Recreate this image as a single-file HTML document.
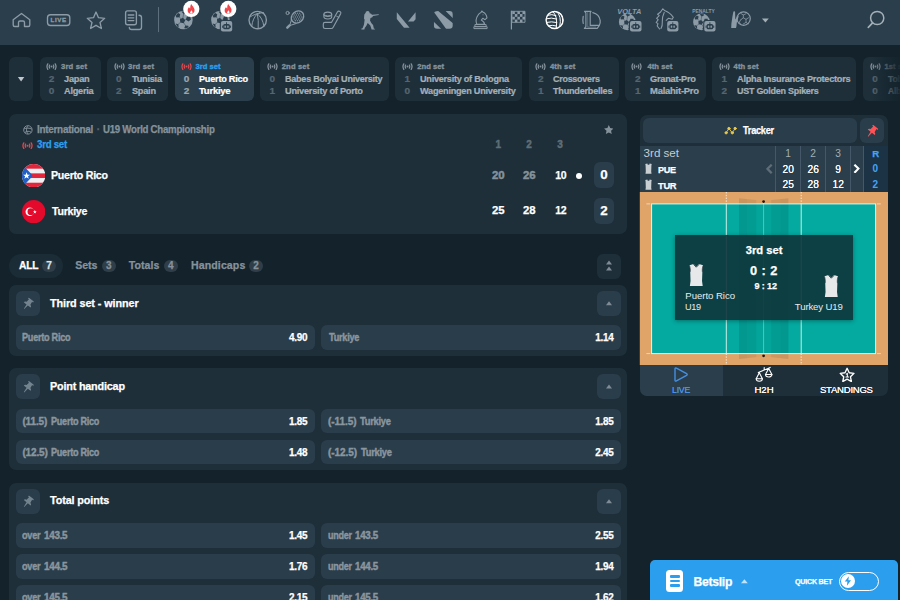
<!DOCTYPE html>
<html><head><meta charset="utf-8"><title>U19 World Championship</title>
<style>
*{box-sizing:border-box;margin:0;padding:0}
html,body{width:900px;height:600px;overflow:hidden;background:#13222b;font-family:"Liberation Sans",sans-serif;color:#fff}
body{position:relative}
.abs{position:absolute}
.t{position:absolute;white-space:nowrap;font-weight:bold;line-height:1;-webkit-text-stroke:0.25px}
#nav{position:absolute;left:0;top:0;width:900px;height:45px;background:#2a3e4c}
</style></head><body>
<div id="nav">
<svg style="position:absolute;left:0;top:0;width:900px;height:45px" viewBox="0 0 900 45" fill="none" stroke="#8c9ba6" stroke-width="1.350" stroke-linecap="round" stroke-linejoin="round"><path d="M13.200 19.800L21.500 13.500L29.800 19.800V25Q29.800 26.500 28.300 26.500H24.500V22.500Q24.500 21 23 21H20Q18.500 21 18.500 22.500V26.500H14.700Q13.200 26.500 13.200 25Z"></path><rect x="47.500" y="14.700" width="22.300" height="10.800" rx="3"></rect><text x="58.700" y="22.400" font-family="Liberation Sans, sans-serif" font-size="6.200" font-weight="bold" fill="#8c9ba6" stroke="#8c9ba6" stroke-width="0.3" text-anchor="middle" letter-spacing="0.600">LIVE</text><path d="M96 12l2.500 5.700 6.200.600-4.700 4.100 1.400 6.100L96 25.300l-5.400 3.200 1.400-6.100-4.700-4.100 6.200-.600z"></path><rect x="125.600" y="10.900" width="10.800" height="13.800" rx="2"></rect><path d="M128.200 15h5.600M128.200 17.800h5.600M128.200 20.600h5.600"></path><path d="M139 15.200q2.500 0 2.500 2.300V27.200q0 2.300-2.300 2.300H131.500q-2.200 0-2.200-2.200"></path><path d="M158.500 7.500V31.700" stroke="#5d6f7c" stroke-width="1"></path><g stroke="none"><circle cx="183.4" cy="20" r="9.3" fill="#8c9ba6"></circle><clipPath id="cb1"><circle cx="183.4" cy="20" r="8.755851063829788"></circle></clipPath><g clip-path="url(#cb1)" fill="#2a3e4c"><path d="M182.98 17.78L185.26 20.27L183.60 23.20L180.30 22.53L179.91 19.18Z"></path><path d="M179.50 17.18L176.37 17.43L175.16 14.53L177.55 12.49L180.23 14.13Z"></path><path d="M180.68 18.56L179.06 16.68" stroke="#2a3e4c" stroke-width="0.69" opacity="0.7"></path><path d="M185.90 19.51L186.90 16.53L190.04 16.57L190.98 19.57L188.41 21.38Z"></path><path d="M184.96 19.80L186.76 19.24" stroke="#2a3e4c" stroke-width="0.69" opacity="0.7"></path><path d="M178.35 24.17L178.62 26.95L176.06 28.06L174.21 25.96L175.63 23.56Z"></path><path d="M180.41 22.36L178.21 24.30" stroke="#2a3e4c" stroke-width="0.69" opacity="0.7"></path><path d="M185.37 25.41L188.27 25.64L188.95 28.46L186.47 29.99L184.26 28.10Z"></path><path d="M183.81 22.87L185.47 25.58" stroke="#2a3e4c" stroke-width="0.69" opacity="0.7"></path><path d="M183.63 13.92L181.54 11.73L182.98 9.07L185.95 9.62L186.36 12.61Z"></path><path d="M182.89 17.97L183.62 13.97" stroke="#2a3e4c" stroke-width="0.69" opacity="0.7"></path></g><circle cx="220.4" cy="20" r="9.3" fill="#8c9ba6"></circle><clipPath id="cb2"><circle cx="220.4" cy="20" r="8.755851063829788"></circle></clipPath><g clip-path="url(#cb2)" fill="#2a3e4c"><path d="M219.98 17.78L222.26 20.27L220.60 23.20L217.30 22.53L216.91 19.18Z"></path><path d="M216.50 17.18L213.37 17.43L212.16 14.53L214.55 12.49L217.23 14.13Z"></path><path d="M217.68 18.56L216.06 16.68" stroke="#2a3e4c" stroke-width="0.69" opacity="0.7"></path><path d="M222.90 19.51L223.90 16.53L227.04 16.57L227.98 19.57L225.41 21.38Z"></path><path d="M221.96 19.80L223.76 19.24" stroke="#2a3e4c" stroke-width="0.69" opacity="0.7"></path><path d="M215.35 24.17L215.62 26.95L213.06 28.06L211.21 25.96L212.63 23.56Z"></path><path d="M217.41 22.36L215.21 24.30" stroke="#2a3e4c" stroke-width="0.69" opacity="0.7"></path><path d="M222.37 25.41L225.27 25.64L225.95 28.46L223.47 29.99L221.26 28.10Z"></path><path d="M220.81 22.87L222.47 25.58" stroke="#2a3e4c" stroke-width="0.69" opacity="0.7"></path><path d="M220.63 13.92L218.54 11.73L219.98 9.07L222.95 9.62L223.36 12.61Z"></path><path d="M219.89 17.97L220.62 13.97" stroke="#2a3e4c" stroke-width="0.69" opacity="0.7"></path></g><rect x="219.8" y="19.9" width="13.5" height="12.8" rx="3" fill="#2a3e4c"></rect><rect x="220.9" y="21" width="11.3" height="10.6" rx="2" fill="#8c9ba6"></rect><rect x="223.20000000000002" y="24.1" width="6.700000000000001" height="5.2" rx="1.500" fill="#2a3e4c"></rect><rect x="222.20000000000002" y="25.6" width="1" height="2.200" fill="#2a3e4c"></rect><rect x="229.9" y="25.6" width="1" height="2.200" fill="#2a3e4c"></rect><rect x="226.10000000000002" y="22.3" width="0.900" height="1.900" fill="#2a3e4c"></rect><rect x="224.45000000000002" y="25.5" width="1.500" height="2.200" rx="0.500" fill="#8c9ba6"></rect><rect x="227.15" y="25.5" width="1.500" height="2.200" rx="0.500" fill="#8c9ba6"></rect><circle cx="191.3" cy="8.9" r="8.1" fill="#fff"></circle><path transform="translate(187.4 3.9000000000000004) scale(0.88)" d="M4.300 0C5.300 2 7.600 3.500 8.100 6.300 8.600 9.100 6.700 11.200 4.200 11.200 1.700 11.200 -0.100 9.300 0.300 6.800 0.500 5.500 1.300 4.600 1.800 3.600 2.200 4.500 2.600 5 3.200 5.300 3.100 3.400 3.400 1.700 4.300 0Z" fill="#f0474d"></path><path transform="translate(187.4 3.9000000000000004) scale(0.88)" d="M4.600 7.200C5.300 8.200 5.900 8.800 5.800 9.700 5.700 10.500 5.100 11 4.400 11 3.700 11 3.100 10.500 3.100 9.700 3.100 8.800 4 8.300 4.600 7.200Z" fill="#fff"></path><circle cx="228.3" cy="8.9" r="8.1" fill="#fff"></circle><path transform="translate(224.4 3.9000000000000004) scale(0.88)" d="M4.300 0C5.300 2 7.600 3.500 8.100 6.300 8.600 9.100 6.700 11.200 4.200 11.200 1.700 11.200 -0.100 9.300 0.300 6.800 0.500 5.500 1.300 4.600 1.800 3.600 2.200 4.500 2.600 5 3.200 5.300 3.100 3.400 3.400 1.700 4.300 0Z" fill="#f0474d"></path><path transform="translate(224.4 3.9000000000000004) scale(0.88)" d="M4.600 7.200C5.300 8.200 5.900 8.800 5.800 9.700 5.700 10.500 5.100 11 4.400 11 3.700 11 3.100 10.500 3.100 9.700 3.100 8.800 4 8.300 4.600 7.200Z" fill="#fff"></path></g><circle cx="257.700" cy="20" r="8.700"></circle><path d="M249.500 17.300Q255.500 13 263.500 12.600M257.300 13.800Q252.500 18.500 251.800 26M257.300 13.800Q258.800 20 258.200 28.500M257.300 13.800Q262.800 18 263.800 26M259 11.500Q260 12.500 259.800 13.500" stroke-width="1"></path><ellipse cx="297.500" cy="17" rx="6.700" ry="5.600" transform="rotate(-40 297.500 17)"></ellipse><path d="M289.600 25.400L287.300 27.700" stroke-width="2.400"></path><path d="M289.800 25L291.600 19.500M290.200 25.400L296 23.600" stroke-width="1"></path><g stroke="none" fill="#8c9ba6" opacity="0.85"><circle cx="294.2" cy="15.1" r="0.75"></circle><circle cx="293.1" cy="17.0" r="0.75"></circle><circle cx="294.2" cy="18.9" r="0.75"></circle><circle cx="295.3" cy="13.2" r="0.75"></circle><circle cx="296.4" cy="15.1" r="0.75"></circle><circle cx="295.3" cy="17.0" r="0.75"></circle><circle cx="296.4" cy="18.9" r="0.75"></circle><circle cx="295.3" cy="20.8" r="0.75"></circle><circle cx="297.5" cy="13.2" r="0.75"></circle><circle cx="298.6" cy="15.1" r="0.75"></circle><circle cx="297.5" cy="17.0" r="0.75"></circle><circle cx="298.6" cy="18.9" r="0.75"></circle><circle cx="297.5" cy="20.8" r="0.75"></circle><circle cx="299.7" cy="13.2" r="0.75"></circle><circle cx="300.8" cy="15.1" r="0.75"></circle><circle cx="299.7" cy="17.0" r="0.75"></circle><circle cx="300.8" cy="18.9" r="0.75"></circle><circle cx="299.7" cy="20.8" r="0.75"></circle><circle cx="301.9" cy="17.0" r="0.75"></circle></g><circle cx="287.600" cy="13" r="1.600" stroke-width="1"></circle><path d="M337.400 12L331.600 22.300H325Q323.300 22.300 323.300 24V26.800Q323.300 28.500 325 28.500H331.300Q332.600 28.500 333.200 27.300L340.700 13.600Q341.300 12.200 340 11.500Q338.300 10.700 337.400 12Z" stroke-width="1.150"></path><path d="M336.600 16.200l2.300 1.200" stroke-width="0.900"></path><ellipse cx="327.800" cy="14.300" rx="3.900" ry="2.200" stroke-width="1.100"></ellipse><path d="M323.900 14.300v2.500q0 2.200 3.900 2.200t3.900-2.200v-2.500" stroke-width="1.100"></path><path d="M325.300 15.400q2.500 1 5 0" stroke-width="0.8"></path><path stroke="none" fill="#8c9ba6" d="M366.800 11.300q1.700-.600 2.600.700l.300 1.300 1.500.500.700 1 6.800-.600.100.800-5.800 1-.700 1.200-1.800.800-.500 2.600 1.500 2.700 1.600 1.600.800 3.800h1v.7h-3.300l-1.300-4-2.600-2.500-1.300 2.800-1.700 2.200-.300 1.500h-3v-.800l1.200-.400 1.400-3.700.600-4.700-.600-1.400.300-3.800 1.400-1.900q-.300-1.200 1.100-1.400z"></path><path stroke="none" fill="#8c9ba6" d="M396.800 12.200l12.800 15.600h-5.600l-7.200-8.800zM415.600 12.200v7l-2 2.400h-5.600z"></path><g stroke="none"><clipPath id="cdota"><rect x="433.900" y="11.100" width="18.800" height="17.700" rx="3.200"></rect></clipPath><g clip-path="url(#cdota)" fill="#8c9ba6"><path d="M433.500 11.500L438.200 11L453 23.200V29H446.200Z"></path><path d="M445.600 11H453V18.300Z"></path><path d="M433.500 21.500L441.300 29H433.500Z"></path></g></g><path d="M476.800 24.400Q475 19.500 477.800 15.500 479 13.300 481 12.600L481.800 11 483.200 12.300Q486.200 13.500 487 17.800L485 19.600 482.800 18.300 481.300 20Q484.300 21.800 484.600 24.400Z" stroke-width="1.100"></path><path d="M475.300 24.600h10.800v2h-10.800zM474.300 26.700h12.800v1.900H474.300z" stroke-width="1"></path><circle cx="483" cy="14.800" r="0.500" fill="#8c9ba6" stroke="none"></circle><path d="M511.400 11V29" stroke-width="1.200"></path><rect x="512.300" y="11.300" width="12.700" height="11" stroke-width="0.9"></rect><g stroke="none" fill="#8c9ba6"><rect x="512.30" y="11.30" width="2.540" height="2.750"></rect><rect x="517.38" y="11.30" width="2.540" height="2.750"></rect><rect x="522.46" y="11.30" width="2.540" height="2.750"></rect><rect x="514.84" y="14.05" width="2.540" height="2.750"></rect><rect x="519.92" y="14.05" width="2.540" height="2.750"></rect><rect x="512.30" y="16.80" width="2.540" height="2.750"></rect><rect x="517.38" y="16.80" width="2.540" height="2.750"></rect><rect x="522.46" y="16.80" width="2.540" height="2.750"></rect><rect x="514.84" y="19.55" width="2.540" height="2.750"></rect><rect x="519.92" y="19.55" width="2.540" height="2.750"></rect></g><g stroke="#fff"><circle cx="554.600" cy="20" r="8.500" stroke-width="1.400"></circle><path d="M547.300 15.300Q552 13.700 556 15.600M546.200 18.800Q551.500 17.200 556.700 19M546.500 22.400Q551.500 21.200 556.700 22.500M548.300 25.800Q552.300 24.800 556.200 25.900M552.600 11.600Q558 15.500 556.300 28M556.300 11.500Q562 15.500 559.800 26.500M559.800 12.800Q563.500 16.500 562.500 23" stroke-width="1"></path></g><path d="M584.600 11.300h6.500l-.900 1.500v12.600h9.200l-2.200 3h-12.800l1.500-1.900v-13.600z" stroke-width="1.150"></path><path d="M587.700 12.500v14.500h8" stroke-width="0.700" opacity="0.700"></path><path d="M592.800 12.600Q599.300 14.200 600.200 20.500Q600.400 22.800 599.600 24.600M583.200 16.300Q582.500 20 583.200 23.500" stroke-width="1.200"></path><g stroke="none"><circle cx="627.3" cy="21.9" r="8.4" fill="#8c9ba6"></circle><clipPath id="cb3"><circle cx="627.3" cy="21.9" r="7.908510638297873"></circle></clipPath><g clip-path="url(#cb3)" fill="#2a3e4c"><path d="M626.92 19.90L628.98 22.14L627.48 24.79L624.50 24.19L624.15 21.16Z"></path><path d="M623.77 19.36L620.95 19.58L619.86 16.96L622.02 15.12L624.44 16.60Z"></path><path d="M624.84 20.60L623.38 18.90" stroke="#2a3e4c" stroke-width="0.63" opacity="0.7"></path><path d="M629.55 21.46L630.46 18.77L633.30 18.80L634.14 21.51L631.83 23.15Z"></path><path d="M628.71 21.72L630.33 21.21" stroke="#2a3e4c" stroke-width="0.63" opacity="0.7"></path><path d="M622.74 25.66L622.98 28.17L620.67 29.18L619.00 27.28L620.28 25.11Z"></path><path d="M624.60 24.03L622.61 25.78" stroke="#2a3e4c" stroke-width="0.63" opacity="0.7"></path><path d="M629.08 26.79L631.70 26.99L632.31 29.54L630.08 30.92L628.08 29.22Z"></path><path d="M627.67 24.49L629.17 26.94" stroke="#2a3e4c" stroke-width="0.63" opacity="0.7"></path><path d="M627.51 16.41L625.62 14.43L626.92 12.03L629.61 12.52L629.97 15.23Z"></path><path d="M626.84 20.06L627.50 16.45" stroke="#2a3e4c" stroke-width="0.63" opacity="0.7"></path></g><rect x="628.9" y="19.9" width="13.7" height="12.8" rx="3" fill="#2a3e4c"></rect><rect x="630" y="21" width="11.5" height="10.6" rx="2" fill="#8c9ba6"></rect><rect x="632.3" y="24.1" width="6.9" height="5.2" rx="1.500" fill="#2a3e4c"></rect><rect x="631.3" y="25.6" width="1" height="2.200" fill="#2a3e4c"></rect><rect x="639.1999999999999" y="25.6" width="1" height="2.200" fill="#2a3e4c"></rect><rect x="635.3" y="22.3" width="0.900" height="1.900" fill="#2a3e4c"></rect><rect x="633.55" y="25.5" width="1.500" height="2.200" rx="0.500" fill="#8c9ba6"></rect><rect x="636.4499999999999" y="25.5" width="1.500" height="2.200" rx="0.500" fill="#8c9ba6"></rect></g><text x="629.300" y="14" font-family="Liberation Sans, sans-serif" font-size="7.500" font-weight="bold" font-style="italic" fill="#8c9ba6" stroke="none" text-anchor="middle" textLength="24" lengthAdjust="spacingAndGlyphs">VOLTA</text><path stroke="#8c9ba6" stroke-width="1.100" fill="none" d="M662.800 8.800L665 10.800Q669.500 12.200 673.300 17.300L672.200 19.200 668.600 18.200 666.200 20.400M662.800 8.800L660.600 12 657.600 14.300 659.200 15.600 656.600 18.400 658.200 19.600 656.200 22.500 658 23.600 657.200 26 659.600 29M664.200 12.500Q662 17 662.300 21.500T661 28.500"></path><g stroke="none"><rect x="666.1" y="19.9" width="13.399999999999999" height="12.8" rx="3" fill="#2a3e4c"></rect><rect x="667.2" y="21" width="11.2" height="10.6" rx="2" fill="#8c9ba6"></rect><rect x="669.5" y="24.1" width="6.6" height="5.2" rx="1.500" fill="#2a3e4c"></rect><rect x="668.5" y="25.6" width="1" height="2.200" fill="#2a3e4c"></rect><rect x="676.1" y="25.6" width="1" height="2.200" fill="#2a3e4c"></rect><rect x="672.35" y="22.3" width="0.900" height="1.900" fill="#2a3e4c"></rect><rect x="670.75" y="25.5" width="1.500" height="2.200" rx="0.500" fill="#8c9ba6"></rect><rect x="673.35" y="25.5" width="1.500" height="2.200" rx="0.500" fill="#8c9ba6"></rect></g><g stroke="none"><circle cx="701.5" cy="21.9" r="8.4" fill="#8c9ba6"></circle><clipPath id="cb4"><circle cx="701.5" cy="21.9" r="7.908510638297873"></circle></clipPath><g clip-path="url(#cb4)" fill="#2a3e4c"><path d="M701.12 19.90L703.18 22.14L701.68 24.79L698.70 24.19L698.35 21.16Z"></path><path d="M697.97 19.36L695.15 19.58L694.06 16.96L696.22 15.12L698.64 16.60Z"></path><path d="M699.04 20.60L697.58 18.90" stroke="#2a3e4c" stroke-width="0.63" opacity="0.7"></path><path d="M703.75 21.46L704.66 18.77L707.50 18.80L708.34 21.51L706.03 23.15Z"></path><path d="M702.91 21.72L704.53 21.21" stroke="#2a3e4c" stroke-width="0.63" opacity="0.7"></path><path d="M696.94 25.66L697.18 28.17L694.87 29.18L693.20 27.28L694.48 25.11Z"></path><path d="M698.80 24.03L696.81 25.78" stroke="#2a3e4c" stroke-width="0.63" opacity="0.7"></path><path d="M703.28 26.79L705.90 26.99L706.51 29.54L704.28 30.92L702.28 29.22Z"></path><path d="M701.87 24.49L703.37 26.94" stroke="#2a3e4c" stroke-width="0.63" opacity="0.7"></path><path d="M701.71 16.41L699.82 14.43L701.12 12.03L703.81 12.52L704.17 15.23Z"></path><path d="M701.04 20.06L701.70 16.45" stroke="#2a3e4c" stroke-width="0.63" opacity="0.7"></path></g><rect x="703.1999999999999" y="19.9" width="13.399999999999999" height="12.8" rx="3" fill="#2a3e4c"></rect><rect x="704.3" y="21" width="11.2" height="10.6" rx="2" fill="#8c9ba6"></rect><rect x="706.5999999999999" y="24.1" width="6.6" height="5.2" rx="1.500" fill="#2a3e4c"></rect><rect x="705.5999999999999" y="25.6" width="1" height="2.200" fill="#2a3e4c"></rect><rect x="713.1999999999999" y="25.6" width="1" height="2.200" fill="#2a3e4c"></rect><rect x="709.4499999999999" y="22.3" width="0.900" height="1.900" fill="#2a3e4c"></rect><rect x="707.8499999999999" y="25.5" width="1.500" height="2.200" rx="0.500" fill="#8c9ba6"></rect><rect x="710.4499999999999" y="25.5" width="1.500" height="2.200" rx="0.500" fill="#8c9ba6"></rect></g><text x="703.500" y="13" font-family="Liberation Sans, sans-serif" font-size="6" font-weight="bold" fill="#8c9ba6" stroke="none" text-anchor="middle" textLength="22.500" lengthAdjust="spacingAndGlyphs">PENALTY</text><circle cx="743.600" cy="18.600" r="6.700" stroke-width="1.200"></circle><path d="M741 13.500l2.300 1.500 2.500-1.200M743.300 15v2.800l-2.300 1.800M743.300 17.800l2.700 1.500 2.500-1.500M746 19.300v3l2 1.500M746 22.300l-2.800 1.800M740.800 19.600l-1.500 2.600 1.500 2.500" stroke-width="0.800"></path><path stroke="none" fill="#8c9ba6" d="M734 11.200q.900-.300 1.100.700l.200 7.600 2-3.300q.700-.900 1.400-.200l-.600 2.300-1.300 4.400-.300 3.300-.500 2h-4.800l.200-4.500 1-6.800 .900-4.800q.200-.600.700-.700z"></path><path d="M762 18.600h6.800l-3.400 3.900z" fill="#a4afb7" stroke="none"></path><circle cx="877.200" cy="18" r="6.600" stroke="#a4afb7" stroke-width="1.500"></circle><path d="M872.600 22.900l-4.300 4.400" stroke="#a4afb7" stroke-width="1.700"></path></svg>
</div>
<div class="abs" style="left:9.3px;top:57.0px;width:23.4px;height:43.5px;background:#1e2f3a;border-radius:6px;"></div>
<svg class="abs" style="left:0;top:0;width:900px;height:600px;pointer-events:none" viewBox="0 0 900 600"><path d="M17.900000000000002 77.1h6.4l-3.2 4.4z" fill="#c0c8ce"></path></svg>
<div class="abs" style="left:40.0px;top:57.0px;width:60.7px;height:43.5px;background:#1e2f3a;border-radius:6px;"></div>
<svg class="abs" style="left:46.2px;top:63.2px;width:11px;height:7.2px" viewBox="0 0 22 14" fill="none" stroke="#85929b" stroke-width="2.5" stroke-linecap="round"><circle cx="11" cy="7" r="2" fill="#85929b" stroke="none"></circle><path d="M7.200 4Q5.700 7 7.200 10M14.800 4Q16.300 7 14.800 10M3.600 1.500Q0.300 7 3.600 12.500M18.400 1.500Q21.700 7 18.400 12.500"></path></svg>
<div class="t" style="left: 61px; top: 63.14px; font-size: 7.6px; color: rgb(133, 146, 155); font-weight: bold; -webkit-text-stroke: 0.35px; letter-spacing: 0.182px; transform: scale(1, 1); transform-origin: 0px 85%;">3rd set</div>
<div class="t" style="left: -8.5px; width: 120px; text-align: center; top: 73.5px; font-size: 10px; color: rgb(86, 102, 112); font-weight: bold; transform: scale(1, 0.94); transform-origin: 50% 85%;">2</div>
<div class="t" style="left: 64.3px; top: 73.5px; font-size: 10px; color: rgb(164, 175, 183); font-weight: bold; letter-spacing: -0.28px; transform: scale(0.9249, 0.94); transform-origin: 0px 85%;">Japan</div>
<div class="t" style="left: -8.5px; width: 120px; text-align: center; top: 85.7px; font-size: 10px; color: rgb(86, 102, 112); font-weight: bold; transform: scale(1, 0.94); transform-origin: 50% 85%;">0</div>
<div class="t" style="left: 64.3px; top: 85.7px; font-size: 10px; color: rgb(164, 175, 183); font-weight: bold; letter-spacing: -0.28px; transform: scale(0.9216, 0.94); transform-origin: 0px 85%;">Algeria</div>
<div class="abs" style="left:107.3px;top:57.0px;width:60.4px;height:43.5px;background:#1e2f3a;border-radius:6px;"></div>
<svg class="abs" style="left:113.5px;top:63.2px;width:11px;height:7.2px" viewBox="0 0 22 14" fill="none" stroke="#85929b" stroke-width="2.5" stroke-linecap="round"><circle cx="11" cy="7" r="2" fill="#85929b" stroke="none"></circle><path d="M7.200 4Q5.700 7 7.200 10M14.800 4Q16.300 7 14.800 10M3.600 1.500Q0.300 7 3.600 12.500M18.400 1.500Q21.700 7 18.400 12.500"></path></svg>
<div class="t" style="left: 128px; top: 63.14px; font-size: 7.6px; color: rgb(133, 146, 155); font-weight: bold; -webkit-text-stroke: 0.35px; letter-spacing: 0.182px; transform: scale(1, 1); transform-origin: 0px 85%;">3rd set</div>
<div class="t" style="left: 58.7px; width: 120px; text-align: center; top: 73.5px; font-size: 10px; color: rgb(86, 102, 112); font-weight: bold; transform: scale(1, 0.94); transform-origin: 50% 85%;">0</div>
<div class="t" style="left: 131.5px; top: 73.5px; font-size: 10px; color: rgb(164, 175, 183); font-weight: bold; letter-spacing: -0.28px; transform: scale(0.9207, 0.94); transform-origin: 0px 85%;">Tunisia</div>
<div class="t" style="left: 58.7px; width: 120px; text-align: center; top: 85.7px; font-size: 10px; color: rgb(86, 102, 112); font-weight: bold; transform: scale(1, 0.94); transform-origin: 50% 85%;">2</div>
<div class="t" style="left: 131.5px; top: 85.7px; font-size: 10px; color: rgb(164, 175, 183); font-weight: bold; letter-spacing: -0.28px; transform: scale(0.919, 0.94); transform-origin: 0px 85%;">Spain</div>
<div class="abs" style="left:174.6px;top:57.0px;width:79.2px;height:43.5px;background:#2a3e4c;border-radius:6px;"></div>
<svg class="abs" style="left:180.8px;top:63.2px;width:11px;height:7.2px" viewBox="0 0 22 14" fill="none" stroke="#e5484d" stroke-width="2.5" stroke-linecap="round"><circle cx="11" cy="7" r="2" fill="#e5484d" stroke="none"></circle><path d="M7.200 4Q5.700 7 7.200 10M14.800 4Q16.300 7 14.800 10M3.600 1.500Q0.300 7 3.600 12.500M18.400 1.500Q21.700 7 18.400 12.500"></path></svg>
<div class="t" style="left: 195.6px; top: 63.14px; font-size: 7.6px; color: rgb(43, 159, 238); font-weight: bold; -webkit-text-stroke: 0.35px; letter-spacing: 0.016px; transform: scale(1, 1); transform-origin: 0px 85%;">3rd set</div>
<div class="t" style="left: 126.6px; width: 120px; text-align: center; top: 73.5px; font-size: 10px; color: rgb(154, 166, 174); font-weight: bold; transform: scale(1, 0.94); transform-origin: 50% 85%;">0</div>
<div class="t" style="left: 198.9px; top: 73.5px; font-size: 10px; color: rgb(255, 255, 255); font-weight: bold; letter-spacing: -0.28px; transform: scale(0.9189, 0.94); transform-origin: 0px 85%;">Puerto Rico</div>
<div class="t" style="left: 126.6px; width: 120px; text-align: center; top: 85.7px; font-size: 10px; color: rgb(154, 166, 174); font-weight: bold; transform: scale(1, 0.94); transform-origin: 50% 85%;">2</div>
<div class="t" style="left: 198.9px; top: 85.7px; font-size: 10px; color: rgb(255, 255, 255); font-weight: bold; letter-spacing: -0.28px; transform: scale(0.9559, 0.94); transform-origin: 0px 85%;">Turkiye</div>
<div class="abs" style="left:260.3px;top:57.0px;width:128.7px;height:43.5px;background:#1e2f3a;border-radius:6px;"></div>
<svg class="abs" style="left:266.5px;top:63.2px;width:11px;height:7.2px" viewBox="0 0 22 14" fill="none" stroke="#85929b" stroke-width="2.5" stroke-linecap="round"><circle cx="11" cy="7" r="2" fill="#85929b" stroke="none"></circle><path d="M7.200 4Q5.700 7 7.200 10M14.800 4Q16.300 7 14.800 10M3.600 1.500Q0.300 7 3.600 12.500M18.400 1.500Q21.700 7 18.400 12.500"></path></svg>
<div class="t" style="left: 281.7px; top: 63.14px; font-size: 7.6px; color: rgb(133, 146, 155); font-weight: bold; -webkit-text-stroke: 0.35px; letter-spacing: 0.168px; transform: scale(1, 1); transform-origin: 0px 85%;">2nd set</div>
<div class="t" style="left: 212.2px; width: 120px; text-align: center; top: 73.5px; font-size: 10px; color: rgb(86, 102, 112); font-weight: bold; transform: scale(1, 0.94); transform-origin: 50% 85%;">0</div>
<div class="t" style="left: 285px; top: 73.5px; font-size: 10px; color: rgb(164, 175, 183); font-weight: bold; letter-spacing: -0.28px; transform: scale(0.9056, 0.94); transform-origin: 0px 85%;">Babes Bolyai University</div>
<div class="t" style="left: 212.2px; width: 120px; text-align: center; top: 85.7px; font-size: 10px; color: rgb(86, 102, 112); font-weight: bold; transform: scale(1, 0.94); transform-origin: 50% 85%;">1</div>
<div class="t" style="left: 285px; top: 85.7px; font-size: 10px; color: rgb(164, 175, 183); font-weight: bold; letter-spacing: -0.28px; transform: scale(0.9239, 0.94); transform-origin: 0px 85%;">University of Porto</div>
<div class="abs" style="left:395.3px;top:57.0px;width:126.7px;height:43.5px;background:#1e2f3a;border-radius:6px;"></div>
<svg class="abs" style="left:401.5px;top:63.2px;width:11px;height:7.2px" viewBox="0 0 22 14" fill="none" stroke="#85929b" stroke-width="2.5" stroke-linecap="round"><circle cx="11" cy="7" r="2" fill="#85929b" stroke="none"></circle><path d="M7.200 4Q5.700 7 7.200 10M14.800 4Q16.300 7 14.800 10M3.600 1.500Q0.300 7 3.600 12.500M18.400 1.500Q21.700 7 18.400 12.500"></path></svg>
<div class="t" style="left: 417.2px; top: 63.14px; font-size: 7.6px; color: rgb(133, 146, 155); font-weight: bold; -webkit-text-stroke: 0.35px; letter-spacing: 0.051px; transform: scale(1, 1); transform-origin: 0px 85%;">2nd set</div>
<div class="t" style="left: 347.3px; width: 120px; text-align: center; top: 73.5px; font-size: 10px; color: rgb(86, 102, 112); font-weight: bold; transform: scale(1, 0.94); transform-origin: 50% 85%;">1</div>
<div class="t" style="left: 420.1px; top: 73.5px; font-size: 10px; color: rgb(164, 175, 183); font-weight: bold; letter-spacing: -0.28px; transform: scale(0.9114, 0.94); transform-origin: 0px 85%;">University of Bologna</div>
<div class="t" style="left: 347.3px; width: 120px; text-align: center; top: 85.7px; font-size: 10px; color: rgb(86, 102, 112); font-weight: bold; transform: scale(1, 0.94); transform-origin: 50% 85%;">0</div>
<div class="t" style="left: 420.1px; top: 85.7px; font-size: 10px; color: rgb(164, 175, 183); font-weight: bold; letter-spacing: -0.28px; transform: scale(0.9157, 0.94); transform-origin: 0px 85%;">Wageningen University</div>
<div class="abs" style="left:528.7px;top:57.0px;width:90.6px;height:43.5px;background:#1e2f3a;border-radius:6px;"></div>
<svg class="abs" style="left:534.9px;top:63.2px;width:11px;height:7.2px" viewBox="0 0 22 14" fill="none" stroke="#85929b" stroke-width="2.5" stroke-linecap="round"><circle cx="11" cy="7" r="2" fill="#85929b" stroke="none"></circle><path d="M7.200 4Q5.700 7 7.200 10M14.800 4Q16.300 7 14.800 10M3.600 1.500Q0.300 7 3.600 12.500M18.400 1.500Q21.700 7 18.400 12.500"></path></svg>
<div class="t" style="left: 550px; top: 63.14px; font-size: 7.6px; color: rgb(133, 146, 155); font-weight: bold; -webkit-text-stroke: 0.35px; letter-spacing: 0.136px; transform: scale(1, 1); transform-origin: 0px 85%;">4th set</div>
<div class="t" style="left: 480.7px; width: 120px; text-align: center; top: 73.5px; font-size: 10px; color: rgb(86, 102, 112); font-weight: bold; transform: scale(1, 0.94); transform-origin: 50% 85%;">2</div>
<div class="t" style="left: 553.2px; top: 73.5px; font-size: 10px; color: rgb(164, 175, 183); font-weight: bold; letter-spacing: -0.28px; transform: scale(0.8931, 0.94); transform-origin: 0px 85%;">Crossovers</div>
<div class="t" style="left: 480.7px; width: 120px; text-align: center; top: 85.7px; font-size: 10px; color: rgb(86, 102, 112); font-weight: bold; transform: scale(1, 0.94); transform-origin: 50% 85%;">1</div>
<div class="t" style="left: 553.2px; top: 85.7px; font-size: 10px; color: rgb(164, 175, 183); font-weight: bold; letter-spacing: -0.28px; transform: scale(0.9154, 0.94); transform-origin: 0px 85%;">Thunderbelles</div>
<div class="abs" style="left:624.7px;top:57.0px;width:80.9px;height:43.5px;background:#1e2f3a;border-radius:6px;"></div>
<svg class="abs" style="left:630.9px;top:63.2px;width:11px;height:7.2px" viewBox="0 0 22 14" fill="none" stroke="#85929b" stroke-width="2.5" stroke-linecap="round"><circle cx="11" cy="7" r="2" fill="#85929b" stroke="none"></circle><path d="M7.200 4Q5.700 7 7.200 10M14.800 4Q16.300 7 14.800 10M3.600 1.500Q0.300 7 3.600 12.500M18.400 1.500Q21.700 7 18.400 12.500"></path></svg>
<div class="t" style="left: 647.4px; top: 63.14px; font-size: 7.6px; color: rgb(133, 146, 155); font-weight: bold; -webkit-text-stroke: 0.35px; letter-spacing: 0.069px; transform: scale(1, 1); transform-origin: 0px 85%;">4th set</div>
<div class="t" style="left: 577.7px; width: 120px; text-align: center; top: 73.5px; font-size: 10px; color: rgb(86, 102, 112); font-weight: bold; transform: scale(1, 0.94); transform-origin: 50% 85%;">2</div>
<div class="t" style="left: 650.2px; top: 73.5px; font-size: 10px; color: rgb(164, 175, 183); font-weight: bold; letter-spacing: -0.28px; transform: scale(0.9253, 0.94); transform-origin: 0px 85%;">Granat-Pro</div>
<div class="t" style="left: 577.7px; width: 120px; text-align: center; top: 85.7px; font-size: 10px; color: rgb(86, 102, 112); font-weight: bold; transform: scale(1, 0.94); transform-origin: 50% 85%;">1</div>
<div class="t" style="left: 650.2px; top: 85.7px; font-size: 10px; color: rgb(164, 175, 183); font-weight: bold; letter-spacing: -0.28px; transform: scale(0.9506, 0.94); transform-origin: 0px 85%;">Malahit-Pro</div>
<div class="abs" style="left:712.4px;top:57.0px;width:144.1px;height:43.5px;background:#1e2f3a;border-radius:6px;"></div>
<svg class="abs" style="left:718.6px;top:63.2px;width:11px;height:7.2px" viewBox="0 0 22 14" fill="none" stroke="#85929b" stroke-width="2.5" stroke-linecap="round"><circle cx="11" cy="7" r="2" fill="#85929b" stroke="none"></circle><path d="M7.200 4Q5.700 7 7.200 10M14.800 4Q16.300 7 14.800 10M3.600 1.500Q0.300 7 3.600 12.500M18.400 1.500Q21.700 7 18.400 12.500"></path></svg>
<div class="t" style="left: 733.6px; top: 63.14px; font-size: 7.6px; color: rgb(133, 146, 155); font-weight: bold; -webkit-text-stroke: 0.35px; letter-spacing: 0.069px; transform: scale(1, 1); transform-origin: 0px 85%;">4th set</div>
<div class="t" style="left: 664.2px; width: 120px; text-align: center; top: 73.5px; font-size: 10px; color: rgb(86, 102, 112); font-weight: bold; transform: scale(1, 0.94); transform-origin: 50% 85%;">1</div>
<div class="t" style="left: 737.3px; top: 73.5px; font-size: 10px; color: rgb(164, 175, 183); font-weight: bold; letter-spacing: -0.28px; transform: scale(0.9191, 0.94); transform-origin: 0px 85%;">Alpha Insurance Protectors</div>
<div class="t" style="left: 664.2px; width: 120px; text-align: center; top: 85.7px; font-size: 10px; color: rgb(86, 102, 112); font-weight: bold; transform: scale(1, 0.94); transform-origin: 50% 85%;">2</div>
<div class="t" style="left: 737.3px; top: 85.7px; font-size: 10px; color: rgb(164, 175, 183); font-weight: bold; letter-spacing: -0.28px; transform: scale(0.8952, 0.94); transform-origin: 0px 85%;">UST Golden Spikers</div>
<div class="abs" style="left:863.3px;top:57.0px;width:96.7px;height:43.5px;background:#1e2f3a;border-radius:6px;"></div>
<svg class="abs" style="left:869.5px;top:63.2px;width:11px;height:7.2px" viewBox="0 0 22 14" fill="none" stroke="#85929b" stroke-width="2.5" stroke-linecap="round"><circle cx="11" cy="7" r="2" fill="#85929b" stroke="none"></circle><path d="M7.200 4Q5.700 7 7.200 10M14.800 4Q16.300 7 14.800 10M3.600 1.500Q0.300 7 3.600 12.500M18.400 1.500Q21.700 7 18.400 12.500"></path></svg>
<div class="t" style="left: 884.5px; top: 63.14px; font-size: 7.6px; color: rgb(133, 146, 155); font-weight: bold; -webkit-text-stroke: 0.35px; letter-spacing: 0.073px; transform: scale(1, 1); transform-origin: 0px 85%;">1st set</div>
<div class="t" style="left: 815.1px; width: 120px; text-align: center; top: 73.5px; font-size: 10px; color: rgb(86, 102, 112); font-weight: bold; transform: scale(1, 0.94); transform-origin: 50% 85%;">0</div>
<div class="t" style="left: 888.2px; top: 73.5px; font-size: 10px; color: rgb(164, 175, 183); font-weight: bold; letter-spacing: -0.28px; transform: scale(0.8771, 0.94); transform-origin: 0px 85%;">Tobago</div>
<div class="t" style="left: 815.1px; width: 120px; text-align: center; top: 85.7px; font-size: 10px; color: rgb(86, 102, 112); font-weight: bold; transform: scale(1, 0.94); transform-origin: 50% 85%;">0</div>
<div class="t" style="left: 888.2px; top: 85.7px; font-size: 10px; color: rgb(164, 175, 183); font-weight: bold; letter-spacing: -0.28px; transform: scale(0.8545, 0.94); transform-origin: 0px 85%;">Alba</div>
<div class="abs" style="left:872px;top:55px;width:28px;height:48px;background:linear-gradient(90deg,rgba(19,34,43,0) 0%,rgba(19,34,43,.5) 50%,rgba(19,34,43,.92) 100%)"></div>
<div class="abs" style="left:9.0px;top:114.0px;width:618.0px;height:120.4px;background:#1e2f3a;border-radius:7px;"></div>
<svg class="abs" style="left:22.800px;top:125.200px;width:9.800px;height:9.800px" viewBox="0 0 20 20" fill="none" stroke="#85929b" stroke-width="1.900"><circle cx="10" cy="10" r="8.600"></circle><path d="M10.500 1.500C6 6 6 14 10.500 18.500M2 8C7 5.500 13 6 18.300 8.500M3.500 15.500c4-3.500 9.500-3.500 13.500-.500"></path></svg>
<div class="t" style="left: 37.4px; top: 124.7px; font-size: 10px; color: rgb(133, 146, 155); font-weight: bold; letter-spacing: -0.28px; transform: scale(0.992, 1); transform-origin: 0px 85%;">International</div>
<div class="t" style="left:96.8px;top:124.70px;font-size:10px;color:#566670;font-weight:bold;">·</div>
<div class="t" style="left: 103px; top: 124.7px; font-size: 10px; color: rgb(133, 146, 155); font-weight: bold; letter-spacing: -0.28px; transform: scale(0.967, 1); transform-origin: 0px 85%;">U19 World Championship</div>
<svg class="abs" style="left:22.0px;top:141.7px;width:11px;height:7.3px" viewBox="0 0 22 14" fill="none" stroke="#e5484d" stroke-width="2.5" stroke-linecap="round"><circle cx="11" cy="7" r="2" fill="#e5484d" stroke="none"></circle><path d="M7.200 4Q5.700 7 7.200 10M14.800 4Q16.300 7 14.800 10M3.600 1.500Q0.300 7 3.600 12.500M18.400 1.500Q21.700 7 18.400 12.500"></path></svg>
<div class="t" style="left: 37px; top: 139.86px; font-size: 10.4px; color: rgb(43, 159, 238); font-weight: bold; letter-spacing: -0.28px; transform: scale(0.9322, 1); transform-origin: 0px 85%;">3rd set</div>
<svg class="abs" style="left:21.600px;top:163.600px;width:23.400px;height:23.400px" viewBox="0 0 24 24"><defs><clipPath id="cpr"><circle cx="12" cy="12" r="12"></circle></clipPath></defs><g clip-path="url(#cpr)"><rect width="24" height="24" fill="#eef0f2"></rect><rect y="0" width="24" height="4.800" fill="#e1263c"></rect><rect y="9.600" width="24" height="4.800" fill="#e1263c"></rect><rect y="19.200" width="24" height="4.800" fill="#e1263c"></rect><path d="M0 0L11.200 12L0 24Z" fill="#1f60c8"></path><path d="M4.700 8.400l.95 2.550h2.650l-2.150 1.600.8 2.600-2.250-1.600-2.250 1.600.8-2.600-2.150-1.600h2.650z" fill="#fff"></path></g></svg>
<svg class="abs" style="left:21.600px;top:199.600px;width:23.400px;height:23.400px" viewBox="0 0 24 24"><circle cx="12" cy="12" r="12" fill="#e30a2b"></circle><circle cx="8" cy="12" r="4.400" fill="#fff"></circle><circle cx="9.150" cy="12" r="3.500" fill="#e30a2b"></circle><path d="M13.200 10.100l.5 1.350 1.450.05-1.150.9.400 1.400-1.200-.800-1.200.800.400-1.400-1.150-.9 1.450-.05z" fill="#fff"></path></svg>
<div class="t" style="left: 51px; top: 169.14px; font-size: 11.6px; color: rgb(255, 255, 255); font-weight: bold; letter-spacing: -0.28px; transform: scale(0.9155, 1); transform-origin: 0px 85%;">Puerto Rico</div>
<div class="t" style="left: 51.6px; top: 204.64px; font-size: 11.6px; color: rgb(255, 255, 255); font-weight: bold; letter-spacing: -0.28px; transform: scale(0.9145, 1); transform-origin: 0px 85%;">Turkiye</div>
<svg class="abs" style="left:603.600px;top:125.100px;width:9.600px;height:9.200px" viewBox="0 0 20 19"><path d="M10 0l2.900 6.300 7 .8-5.200 4.700 1.500 6.900L10 15.300 3.800 18.700l1.500-6.900L.1 7.100l7-.8z" fill="#85929b"></path></svg>
<div class="t" style="left: 438.4px; width: 120px; text-align: center; top: 140.1px; font-size: 10px; color: rgb(95, 110, 120); font-weight: bold; -webkit-text-stroke: 0.45px; transform: scale(1, 1); transform-origin: 50% 85%;">1</div>
<div class="t" style="left: 469px; width: 120px; text-align: center; top: 140.1px; font-size: 10px; color: rgb(95, 110, 120); font-weight: bold; -webkit-text-stroke: 0.45px; transform: scale(1, 1); transform-origin: 50% 85%;">2</div>
<div class="t" style="left: 500px; width: 120px; text-align: center; top: 140.1px; font-size: 10px; color: rgb(95, 110, 120); font-weight: bold; -webkit-text-stroke: 0.45px; transform: scale(1, 1); transform-origin: 50% 85%;">3</div>
<div class="t" style="left: 438.3px; width: 120px; text-align: center; top: 170.01px; font-size: 11.4px; color: rgb(133, 146, 155); font-weight: bold; -webkit-text-stroke: 0.5px; letter-spacing: -0.072px; text-indent: -0.072px;">20</div>
<div class="t" style="left: 469.3px; width: 120px; text-align: center; top: 170.01px; font-size: 11.4px; color: rgb(133, 146, 155); font-weight: bold; -webkit-text-stroke: 0.5px; letter-spacing: -0.072px; text-indent: -0.072px;">26</div>
<div class="t" style="left: 500.7px; width: 120px; text-align: center; top: 170.01px; font-size: 11.4px; color: rgb(255, 255, 255); font-weight: bold; letter-spacing: -0.28px; text-indent: -0.28px; transform: scale(0.92, 1); transform-origin: 50% 85%;">10</div>
<div class="t" style="left: 438.3px; width: 120px; text-align: center; top: 205.31px; font-size: 11.4px; color: rgb(255, 255, 255); font-weight: bold; letter-spacing: -0.072px; text-indent: -0.072px;">25</div>
<div class="t" style="left: 469.3px; width: 120px; text-align: center; top: 205.31px; font-size: 11.4px; color: rgb(255, 255, 255); font-weight: bold; letter-spacing: -0.072px; text-indent: -0.072px;">28</div>
<div class="t" style="left: 500.7px; width: 120px; text-align: center; top: 205.31px; font-size: 11.4px; color: rgb(255, 255, 255); font-weight: bold; letter-spacing: -0.28px; text-indent: -0.28px; transform: scale(0.92, 1); transform-origin: 50% 85%;">12</div>
<div class="abs" style="left:575.6px;top:172.6px;width:6.0px;height:6.0px;background:#fff;border-radius:3px;"></div>
<div class="abs" style="left:594.0px;top:162.4px;width:20.0px;height:26.0px;background:#2a3d4b;border-radius:6px;"></div>
<div class="abs" style="left:594.0px;top:198.0px;width:20.0px;height:26.0px;background:#2a3d4b;border-radius:6px;"></div>
<div class="t" style="left:544.0px;width:120px;text-align:center;top:168.11px;font-size:13.4px;color:#fff;font-weight:bold;">0</div>
<div class="t" style="left:544.0px;width:120px;text-align:center;top:203.71px;font-size:13.4px;color:#fff;font-weight:bold;">2</div>
<div class="abs" style="left:9.3px;top:254.3px;width:53.5px;height:23.9px;background:#1c2c36;border-radius:12px;"></div>
<div class="t" style="left: 18.7px; top: 260.09px; font-size: 10.6px; color: rgb(255, 255, 255); font-weight: bold; letter-spacing: -0.28px; transform: scale(0.9734, 1); transform-origin: 0px 85%;">ALL</div>
<div class="abs" style="left:41.8px;top:260.1px;width:14.5px;height:11.6px;background:#2f3e49;border-radius:6px;"></div>
<div class="t" style="left: -11px; width: 120px; text-align: center; top: 260.5px; font-size: 10px; color: rgb(223, 227, 230); font-weight: bold; transform: scale(1, 1); transform-origin: 50% 85%;">7</div>
<div class="t" style="left: 75.3px; top: 260.09px; font-size: 10.6px; color: rgb(133, 146, 155); font-weight: bold; letter-spacing: -0.097px;">Sets</div>
<div class="abs" style="left:101.5px;top:260.1px;width:14.5px;height:11.6px;background:#2f3e49;border-radius:6px;"></div>
<div class="t" style="left: 48.8px; width: 120px; text-align: center; top: 260.5px; font-size: 10px; color: rgb(133, 146, 155); font-weight: bold; transform: scale(1, 1); transform-origin: 50% 85%;">3</div>
<div class="t" style="left: 128.7px; top: 260.09px; font-size: 10.6px; color: rgb(133, 146, 155); font-weight: bold; letter-spacing: 0.036px;">Totals</div>
<div class="abs" style="left:163.5px;top:260.1px;width:14.3px;height:11.6px;background:#2f3e49;border-radius:6px;"></div>
<div class="t" style="left: 110.7px; width: 120px; text-align: center; top: 260.5px; font-size: 10px; color: rgb(133, 146, 155); font-weight: bold; transform: scale(1, 1); transform-origin: 50% 85%;">4</div>
<div class="t" style="left: 191px; top: 260.09px; font-size: 10.6px; color: rgb(133, 146, 155); font-weight: bold; letter-spacing: 0.09px;">Handicaps</div>
<div class="abs" style="left:249.0px;top:260.1px;width:14.2px;height:11.6px;background:#2f3e49;border-radius:6px;"></div>
<div class="t" style="left: 196.1px; width: 120px; text-align: center; top: 260.5px; font-size: 10px; color: rgb(133, 146, 155); font-weight: bold; transform: scale(1, 1); transform-origin: 50% 85%;">2</div>
<div class="abs" style="left:597.4px;top:254.3px;width:23.2px;height:24.7px;background:#1e2f3a;border-radius:6px;"></div>
<svg class="abs" style="left:0;top:0;width:900px;height:600px;pointer-events:none" viewBox="0 0 900 600"><path d="M606.0 264.6h6l-3.0 -4z" fill="#7f8c95"></path></svg>
<svg class="abs" style="left:0;top:0;width:900px;height:600px;pointer-events:none" viewBox="0 0 900 600"><path d="M606.0 270.6h6l-3.0 -4z" fill="#7f8c95"></path></svg>
<div class="abs" style="left:9.0px;top:285.0px;width:618.0px;height:71.1px;background:#1e2f3a;border-radius:7px;"></div>
<div class="abs" style="left:15.6px;top:290.8px;width:24.4px;height:25.0px;background:#2a3d4b;border-radius:6px;"></div>
<svg class="abs" style="left:0;top:0;width:900px;height:600px;pointer-events:none" viewBox="0 0 900 600"><path transform="translate(27.8 304.1) rotate(38) scale(0.9)" d="M-3-6.400h6q.700 0 .700.700t-.700.700h-.800l.500 3.800q2.100.600 2.100 1.900v.400h-3.900l-.600 5.700h-.600l-.600-5.700h-3.900v-.400q0-1.300 2.100-1.900l.500-3.800h-.800q-.700 0-.700-.700t.700-.700z" fill="#73848f"></path></svg>
<div class="t" style="left: 50px; top: 297.52px; font-size: 10.8px; color: rgb(255, 255, 255); font-weight: bold; letter-spacing: -0.081px; transform: scale(1, 1); transform-origin: 0px 85%;">Third set - winner</div>
<div class="abs" style="left:597.4px;top:291.0px;width:23.2px;height:25.0px;background:#2a3d4b;border-radius:6px;"></div>
<svg class="abs" style="left:0;top:0;width:900px;height:600px;pointer-events:none" viewBox="0 0 900 600"><path d="M606.0 305.3h6l-3.0 -4z" fill="#7f8c95"></path></svg>
<div class="abs" style="left:16.0px;top:325.4px;width:299.0px;height:24.4px;background:#2a3d4b;border-radius:6px;"></div>
<div class="abs" style="left:321.2px;top:325.4px;width:299.4px;height:24.4px;background:#2a3d4b;border-radius:6px;"></div>
<div class="t" style="left: 22.4px; top: 333.4px; font-size: 10px; color: rgb(138, 150, 158); font-weight: bold; -webkit-text-stroke: 0.4px; letter-spacing: -0.28px; transform: scale(0.9114, 1); transform-origin: 0px 85%;">Puerto Rico</div>
<div class="t" style="left: 328.6px; top: 333.4px; font-size: 10px; color: rgb(138, 150, 158); font-weight: bold; -webkit-text-stroke: 0.4px; letter-spacing: -0.28px; transform: scale(0.9167, 1); transform-origin: 0px 85%;">Turkiye</div>
<div class="t" style="right: 592px; top: 333.4px; font-size: 10px; color: rgb(255, 255, 255); font-weight: bold; letter-spacing: -0.28px; margin-right: 0.28px; transform: scale(0.9985, 1); transform-origin: 100% 85%;">4.90</div>
<div class="t" style="right: 286.4px; top: 333.4px; font-size: 10px; color: rgb(255, 255, 255); font-weight: bold; letter-spacing: -0.28px; margin-right: 0.28px; transform: scale(0.9877, 1); transform-origin: 100% 85%;">1.14</div>
<div class="abs" style="left:9.0px;top:368.3px;width:618.0px;height:102.1px;background:#1e2f3a;border-radius:7px;"></div>
<div class="abs" style="left:15.6px;top:374.1px;width:24.4px;height:25.0px;background:#2a3d4b;border-radius:6px;"></div>
<svg class="abs" style="left:0;top:0;width:900px;height:600px;pointer-events:none" viewBox="0 0 900 600"><path transform="translate(27.8 387.40000000000003) rotate(38) scale(0.9)" d="M-3-6.400h6q.700 0 .700.700t-.700.700h-.800l.500 3.800q2.100.600 2.100 1.900v.400h-3.900l-.600 5.700h-.600l-.600-5.700h-3.900v-.400q0-1.300 2.100-1.900l.500-3.800h-.800q-.700 0-.700-.700t.700-.700z" fill="#73848f"></path></svg>
<div class="t" style="left: 50px; top: 380.82px; font-size: 10.8px; color: rgb(255, 255, 255); font-weight: bold; letter-spacing: -0.184px; transform: scale(1, 1); transform-origin: 0px 85%;">Point handicap</div>
<div class="abs" style="left:597.4px;top:374.3px;width:23.2px;height:25.0px;background:#2a3d4b;border-radius:6px;"></div>
<svg class="abs" style="left:0;top:0;width:900px;height:600px;pointer-events:none" viewBox="0 0 900 600"><path d="M606.0 388.6h6l-3.0 -4z" fill="#7f8c95"></path></svg>
<div class="abs" style="left:16.0px;top:408.7px;width:299.0px;height:24.4px;background:#2a3d4b;border-radius:6px;"></div>
<div class="abs" style="left:321.2px;top:408.7px;width:299.4px;height:24.4px;background:#2a3d4b;border-radius:6px;"></div>
<div class="t" style="left: 22.4px; top: 416.7px; font-size: 10px; color: rgb(138, 150, 158); font-weight: bold; -webkit-text-stroke: 0.4px; letter-spacing: -0.116px; transform: scale(1, 1); transform-origin: 0px 85%;">(11.5)</div>
<div class="t" style="left: 51px; top: 416.7px; font-size: 10px; color: rgb(138, 150, 158); font-weight: bold; -webkit-text-stroke: 0.4px; letter-spacing: -0.28px; transform: scale(0.9076, 1); transform-origin: 0px 85%;">Puerto Rico</div>
<div class="t" style="left: 328px; top: 416.7px; font-size: 10px; color: rgb(138, 150, 158); font-weight: bold; -webkit-text-stroke: 0.4px; letter-spacing: -0.034px; transform: scale(1, 1); transform-origin: 0px 85%;">(-11.5)</div>
<div class="t" style="left: 360.3px; top: 416.7px; font-size: 10px; color: rgb(138, 150, 158); font-weight: bold; -webkit-text-stroke: 0.4px; letter-spacing: -0.28px; transform: scale(0.9317, 1); transform-origin: 0px 85%;">Turkiye</div>
<div class="t" style="right: 592px; top: 416.7px; font-size: 10px; color: rgb(255, 255, 255); font-weight: bold; letter-spacing: -0.28px; margin-right: 0.28px; transform: scale(0.9985, 1); transform-origin: 100% 85%;">1.85</div>
<div class="t" style="right: 286.4px; top: 416.7px; font-size: 10px; color: rgb(255, 255, 255); font-weight: bold; letter-spacing: -0.28px; margin-right: 0.28px; transform: scale(0.9877, 1); transform-origin: 100% 85%;">1.85</div>
<div class="abs" style="left:16.0px;top:439.7px;width:299.0px;height:24.4px;background:#2a3d4b;border-radius:6px;"></div>
<div class="abs" style="left:321.2px;top:439.7px;width:299.4px;height:24.4px;background:#2a3d4b;border-radius:6px;"></div>
<div class="t" style="left: 22.4px; top: 447.7px; font-size: 10px; color: rgb(138, 150, 158); font-weight: bold; -webkit-text-stroke: 0.4px; letter-spacing: -0.145px; transform: scale(1, 1); transform-origin: 0px 85%;">(12.5)</div>
<div class="t" style="left: 51.4px; top: 447.7px; font-size: 10px; color: rgb(138, 150, 158); font-weight: bold; -webkit-text-stroke: 0.4px; letter-spacing: -0.28px; transform: scale(0.9076, 1); transform-origin: 0px 85%;">Puerto Rico</div>
<div class="t" style="left: 328px; top: 447.7px; font-size: 10px; color: rgb(138, 150, 158); font-weight: bold; -webkit-text-stroke: 0.4px; letter-spacing: -0.059px; transform: scale(1, 1); transform-origin: 0px 85%;">(-12.5)</div>
<div class="t" style="left: 360.7px; top: 447.7px; font-size: 10px; color: rgb(138, 150, 158); font-weight: bold; -webkit-text-stroke: 0.4px; letter-spacing: -0.28px; transform: scale(0.9317, 1); transform-origin: 0px 85%;">Turkiye</div>
<div class="t" style="right: 592px; top: 447.7px; font-size: 10px; color: rgb(255, 255, 255); font-weight: bold; letter-spacing: -0.28px; margin-right: 0.28px; transform: scale(0.9985, 1); transform-origin: 100% 85%;">1.48</div>
<div class="t" style="right: 286.4px; top: 447.7px; font-size: 10px; color: rgb(255, 255, 255); font-weight: bold; letter-spacing: -0.28px; margin-right: 0.28px; transform: scale(0.9877, 1); transform-origin: 100% 85%;">2.45</div>
<div class="abs" style="left:9.0px;top:482.9px;width:618.0px;height:164.1px;background:#1e2f3a;border-radius:7px;"></div>
<div class="abs" style="left:15.6px;top:488.7px;width:24.4px;height:25.0px;background:#2a3d4b;border-radius:6px;"></div>
<svg class="abs" style="left:0;top:0;width:900px;height:600px;pointer-events:none" viewBox="0 0 900 600"><path transform="translate(27.8 502.0) rotate(38) scale(0.9)" d="M-3-6.400h6q.700 0 .700.700t-.700.700h-.800l.500 3.800q2.100.600 2.100 1.900v.400h-3.900l-.600 5.700h-.600l-.600-5.700h-3.900v-.400q0-1.300 2.100-1.900l.500-3.800h-.800q-.700 0-.700-.700t.700-.700z" fill="#73848f"></path></svg>
<div class="t" style="left: 50px; top: 495.42px; font-size: 10.8px; color: rgb(255, 255, 255); font-weight: bold; letter-spacing: -0.107px; transform: scale(1, 1); transform-origin: 0px 85%;">Total points</div>
<div class="abs" style="left:597.4px;top:488.9px;width:23.2px;height:25.0px;background:#2a3d4b;border-radius:6px;"></div>
<svg class="abs" style="left:0;top:0;width:900px;height:600px;pointer-events:none" viewBox="0 0 900 600"><path d="M606.0 503.2h6l-3.0 -4z" fill="#7f8c95"></path></svg>
<div class="abs" style="left:16.0px;top:523.3px;width:299.0px;height:24.4px;background:#2a3d4b;border-radius:6px;"></div>
<div class="abs" style="left:321.2px;top:523.3px;width:299.4px;height:24.4px;background:#2a3d4b;border-radius:6px;"></div>
<div class="t" style="left: 22.2px; top: 531.3px; font-size: 10px; color: rgb(138, 150, 158); font-weight: bold; -webkit-text-stroke: 0.4px; letter-spacing: -0.28px; transform: scale(0.9169, 1); transform-origin: 0px 85%;">over</div>
<div class="t" style="left: 43.6px; top: 531.3px; font-size: 10px; color: rgb(138, 150, 158); font-weight: bold; -webkit-text-stroke: 0.4px; letter-spacing: -0.28px; transform: scale(0.987, 1); transform-origin: 0px 85%;">143.5</div>
<div class="t" style="left: 328px; top: 531.3px; font-size: 10px; color: rgb(138, 150, 158); font-weight: bold; -webkit-text-stroke: 0.4px; letter-spacing: -0.28px; transform: scale(0.9002, 1); transform-origin: 0px 85%;">under</div>
<div class="t" style="left: 355px; top: 531.3px; font-size: 10px; color: rgb(138, 150, 158); font-weight: bold; -webkit-text-stroke: 0.4px; letter-spacing: -0.28px; transform: scale(0.9744, 1); transform-origin: 0px 85%;">143.5</div>
<div class="t" style="right: 592px; top: 531.3px; font-size: 10px; color: rgb(255, 255, 255); font-weight: bold; letter-spacing: -0.28px; margin-right: 0.28px; transform: scale(0.9985, 1); transform-origin: 100% 85%;">1.45</div>
<div class="t" style="right: 286.4px; top: 531.3px; font-size: 10px; color: rgb(255, 255, 255); font-weight: bold; letter-spacing: -0.28px; margin-right: 0.28px; transform: scale(0.9877, 1); transform-origin: 100% 85%;">2.55</div>
<div class="abs" style="left:16.0px;top:554.3px;width:299.0px;height:24.4px;background:#2a3d4b;border-radius:6px;"></div>
<div class="abs" style="left:321.2px;top:554.3px;width:299.4px;height:24.4px;background:#2a3d4b;border-radius:6px;"></div>
<div class="t" style="left: 22.2px; top: 562.3px; font-size: 10px; color: rgb(138, 150, 158); font-weight: bold; -webkit-text-stroke: 0.4px; letter-spacing: -0.28px; transform: scale(0.9169, 1); transform-origin: 0px 85%;">over</div>
<div class="t" style="left: 43.6px; top: 562.3px; font-size: 10px; color: rgb(138, 150, 158); font-weight: bold; -webkit-text-stroke: 0.4px; letter-spacing: -0.28px; transform: scale(0.987, 1); transform-origin: 0px 85%;">144.5</div>
<div class="t" style="left: 328px; top: 562.3px; font-size: 10px; color: rgb(138, 150, 158); font-weight: bold; -webkit-text-stroke: 0.4px; letter-spacing: -0.28px; transform: scale(0.9002, 1); transform-origin: 0px 85%;">under</div>
<div class="t" style="left: 355px; top: 562.3px; font-size: 10px; color: rgb(138, 150, 158); font-weight: bold; -webkit-text-stroke: 0.4px; letter-spacing: -0.28px; transform: scale(0.9744, 1); transform-origin: 0px 85%;">144.5</div>
<div class="t" style="right: 592px; top: 562.3px; font-size: 10px; color: rgb(255, 255, 255); font-weight: bold; letter-spacing: -0.28px; margin-right: 0.28px; transform: scale(0.9985, 1); transform-origin: 100% 85%;">1.76</div>
<div class="t" style="right: 286.4px; top: 562.3px; font-size: 10px; color: rgb(255, 255, 255); font-weight: bold; letter-spacing: -0.28px; margin-right: 0.28px; transform: scale(0.9877, 1); transform-origin: 100% 85%;">1.94</div>
<div class="abs" style="left:16.0px;top:585.3px;width:299.0px;height:24.4px;background:#2a3d4b;border-radius:6px;"></div>
<div class="abs" style="left:321.2px;top:585.3px;width:299.4px;height:24.4px;background:#2a3d4b;border-radius:6px;"></div>
<div class="t" style="left: 22.2px; top: 593.3px; font-size: 10px; color: rgb(138, 150, 158); font-weight: bold; -webkit-text-stroke: 0.4px; letter-spacing: -0.28px; transform: scale(0.9169, 1); transform-origin: 0px 85%;">over</div>
<div class="t" style="left: 43.6px; top: 593.3px; font-size: 10px; color: rgb(138, 150, 158); font-weight: bold; -webkit-text-stroke: 0.4px; letter-spacing: -0.28px; transform: scale(0.987, 1); transform-origin: 0px 85%;">145.5</div>
<div class="t" style="left: 328px; top: 593.3px; font-size: 10px; color: rgb(138, 150, 158); font-weight: bold; -webkit-text-stroke: 0.4px; letter-spacing: -0.28px; transform: scale(0.9002, 1); transform-origin: 0px 85%;">under</div>
<div class="t" style="left: 355px; top: 593.3px; font-size: 10px; color: rgb(138, 150, 158); font-weight: bold; -webkit-text-stroke: 0.4px; letter-spacing: -0.28px; transform: scale(0.9744, 1); transform-origin: 0px 85%;">145.5</div>
<div class="t" style="right: 592px; top: 593.3px; font-size: 10px; color: rgb(255, 255, 255); font-weight: bold; letter-spacing: -0.28px; margin-right: 0.28px; transform: scale(0.9985, 1); transform-origin: 100% 85%;">2.15</div>
<div class="t" style="right: 286.4px; top: 593.3px; font-size: 10px; color: rgb(255, 255, 255); font-weight: bold; letter-spacing: -0.28px; margin-right: 0.28px; transform: scale(0.9877, 1); transform-origin: 100% 85%;">1.62</div>
<div class="abs" style="left:16.0px;top:616.3px;width:299.0px;height:24.4px;background:#2a3d4b;border-radius:6px;"></div>
<div class="abs" style="left:321.2px;top:616.3px;width:299.4px;height:24.4px;background:#2a3d4b;border-radius:6px;"></div>
<div class="t" style="left: 22.2px; top: 624.3px; font-size: 10px; color: rgb(138, 150, 158); font-weight: bold; -webkit-text-stroke: 0.4px; letter-spacing: -0.28px; transform: scale(0.9169, 1); transform-origin: 0px 85%;">over</div>
<div class="t" style="left: 43.6px; top: 624.3px; font-size: 10px; color: rgb(138, 150, 158); font-weight: bold; -webkit-text-stroke: 0.4px; letter-spacing: -0.28px; transform: scale(0.987, 1); transform-origin: 0px 85%;">146.5</div>
<div class="t" style="left: 328px; top: 624.3px; font-size: 10px; color: rgb(138, 150, 158); font-weight: bold; -webkit-text-stroke: 0.4px; letter-spacing: -0.28px; transform: scale(0.9002, 1); transform-origin: 0px 85%;">under</div>
<div class="t" style="left: 355px; top: 624.3px; font-size: 10px; color: rgb(138, 150, 158); font-weight: bold; -webkit-text-stroke: 0.4px; letter-spacing: -0.28px; transform: scale(0.9744, 1); transform-origin: 0px 85%;">146.5</div>
<div class="t" style="right: 592px; top: 624.3px; font-size: 10px; color: rgb(255, 255, 255); font-weight: bold; letter-spacing: -0.28px; margin-right: 0.28px; transform: scale(0.9985, 1); transform-origin: 100% 85%;">2.60</div>
<div class="t" style="right: 286.4px; top: 624.3px; font-size: 10px; color: rgb(255, 255, 255); font-weight: bold; letter-spacing: -0.28px; margin-right: 0.28px; transform: scale(0.9877, 1); transform-origin: 100% 85%;">1.40</div>
<div id="tracker" class="abs" style="left:639.6px;top:115px;width:248.4px;height:281px;background:#1e2f3a;border-radius:7px;overflow:hidden">
</div>
<div class="abs" style="left:643.0px;top:118.2px;width:214.0px;height:24.7px;background:#2a3d4b;border-radius:6px;"></div>
<svg class="abs" style="left:720px;top:124px;width:20px;height:14px" viewBox="720 124 20 14" fill="#ecc94b" stroke="#ecc94b" stroke-width="0.900" stroke-linecap="round"><path d="M726.100 132.800L728.900 128.500L732.300 132.800L735.100 128.500" fill="none"></path><circle cx="726.100" cy="132.800" r="1.150"></circle><circle cx="728.900" cy="128.500" r="1.150"></circle><circle cx="732.300" cy="132.800" r="1.150"></circle><circle cx="735.100" cy="128.500" r="1.150"></circle></svg>
<div class="t" style="left: 743.4px; top: 125.53px; font-size: 10.2px; color: rgb(255, 255, 255); font-weight: bold; letter-spacing: -0.28px; transform: scale(0.8992, 1); transform-origin: 0px 85%;">Tracker</div>
<div class="abs" style="left:860.0px;top:118.2px;width:24.4px;height:24.7px;background:#2a3d4b;border-radius:6px;"></div>
<svg class="abs" style="left:0;top:0;width:900px;height:600px" viewBox="0 0 900 600"><path transform="translate(871.900 131.500) rotate(38) scale(0.930)" d="M-3-6.400h6q.700 0 .700.700t-.700.700h-.800l.500 3.800q2.100.600 2.100 1.900v.400h-3.900l-.600 5.700h-.600l-.600-5.700h-3.900v-.400q0-1.300 2.100-1.900l.500-3.800h-.800q-.700 0-.700-.700t.700-.700z" fill="#ff5257"></path></svg>
<div class="abs" style="left:639.6px;top:146.0px;width:248.4px;height:46.0px;background:#2a3e4c;border-radius:0px;"></div>
<div class="abs" style="left:864.0px;top:146.0px;width:24.0px;height:46.0px;background:#1c3346;border-radius:0px;"></div>
<div class="abs" style="left:775.1px;top:146.0px;width:1.0px;height:46.0px;background:#44586a;border-radius:0px;"></div>
<div class="abs" style="left:800.1px;top:146.0px;width:1.0px;height:46.0px;background:#44586a;border-radius:0px;"></div>
<div class="abs" style="left:825.1px;top:146.0px;width:1.0px;height:46.0px;background:#44586a;border-radius:0px;"></div>
<div class="abs" style="left:850.1px;top:146.0px;width:1.0px;height:46.0px;background:#44586a;border-radius:0px;"></div>
<div class="abs" style="left:863.1px;top:146.0px;width:1.0px;height:46.0px;background:#44586a;border-radius:0px;"></div>
<div class="t" style="left: 643.6px; top: 147.24px; font-size: 11.6px; color: rgb(197, 204, 209); font-weight: normal; -webkit-text-stroke: 0px; letter-spacing: -0.009px;">3rd set</div>
<svg class="abs" style="left:645px;top:163px;width:7px;height:11px" viewBox="0 0 15 24"><path d="M0.500 2.300L4.700 1.100 7.500 3.900 10.300 1.100 14.500 2.300Q13.500 6 13.700 10L13.400 18.500 14.100 23.600H0.900L1.600 18.500 1.300 10Q1.500 6 0.500 2.300Z" fill="#c9ced2"></path><path d="M4.500 1.300L7.500 4.300 10.500 1.300" fill="none" stroke="#3a464f" stroke-width="1.300"></path></svg>
<svg class="abs" style="left:645px;top:179px;width:7px;height:11px" viewBox="0 0 15 24"><path d="M0.500 2.300L4.700 1.100 7.500 3.900 10.300 1.100 14.500 2.300Q13.500 6 13.700 10L13.400 18.500 14.100 23.600H0.900L1.600 18.500 1.300 10Q1.500 6 0.500 2.300Z" fill="#c9ced2"></path><path d="M4.500 1.300L7.500 4.300 10.500 1.300" fill="none" stroke="#3a464f" stroke-width="1.300"></path></svg>
<div class="t" style="left: 658px; top: 164.64px; font-size: 9.6px; color: rgb(255, 255, 255); font-weight: bold; letter-spacing: -0.28px; transform: scale(0.9492, 1); transform-origin: 0px 85%;">PUE</div>
<div class="t" style="left: 658.4px; top: 180.94px; font-size: 9.6px; color: rgb(255, 255, 255); font-weight: bold; letter-spacing: -0.28px; transform: scale(0.9708, 1); transform-origin: 0px 85%;">TUR</div>
<div class="t" style="left:728.2px;width:120px;text-align:center;top:148.53px;font-size:10.2px;color:#a4afb7;font-weight:normal;-webkit-text-stroke:0;">1</div>
<div class="t" style="left:728.2px;width:120px;text-align:center;top:164.53px;font-size:10.2px;color:#fff;font-weight:normal;-webkit-text-stroke:0;text-shadow:0 0 0.4px currentColor;">20</div>
<div class="t" style="left:728.2px;width:120px;text-align:center;top:180.13px;font-size:10.2px;color:#fff;font-weight:normal;-webkit-text-stroke:0;text-shadow:0 0 0.4px currentColor;">25</div>
<div class="t" style="left:753.2px;width:120px;text-align:center;top:148.53px;font-size:10.2px;color:#a4afb7;font-weight:normal;-webkit-text-stroke:0;">2</div>
<div class="t" style="left:753.2px;width:120px;text-align:center;top:164.53px;font-size:10.2px;color:#fff;font-weight:normal;-webkit-text-stroke:0;text-shadow:0 0 0.4px currentColor;">26</div>
<div class="t" style="left:753.2px;width:120px;text-align:center;top:180.13px;font-size:10.2px;color:#fff;font-weight:normal;-webkit-text-stroke:0;text-shadow:0 0 0.4px currentColor;">28</div>
<div class="t" style="left:778.2px;width:120px;text-align:center;top:148.53px;font-size:10.2px;color:#a4afb7;font-weight:normal;-webkit-text-stroke:0;">3</div>
<div class="t" style="left:778.2px;width:120px;text-align:center;top:164.53px;font-size:10.2px;color:#fff;font-weight:normal;-webkit-text-stroke:0;text-shadow:0 0 0.4px currentColor;">9</div>
<div class="t" style="left:778.2px;width:120px;text-align:center;top:180.13px;font-size:10.2px;color:#fff;font-weight:normal;-webkit-text-stroke:0;text-shadow:0 0 0.4px currentColor;">12</div>
<div class="t" style="left: 815.6px; width: 120px; text-align: center; top: 149.14px; font-size: 9.6px; color: rgb(68, 163, 246); font-weight: bold; transform: scale(1, 1); transform-origin: 50% 85%;">R</div>
<div class="t" style="left: 815.4px; width: 120px; text-align: center; top: 164.1px; font-size: 10px; color: rgb(68, 163, 246); font-weight: bold; -webkit-text-stroke: 0px; transform: scale(1, 1); transform-origin: 50% 85%;">0</div>
<div class="t" style="left: 815.4px; width: 120px; text-align: center; top: 179.7px; font-size: 10px; color: rgb(68, 163, 246); font-weight: bold; -webkit-text-stroke: 0px; transform: scale(1, 1); transform-origin: 50% 85%;">2</div>
<svg class="abs" style="left:766px;top:164px;width:7px;height:10px" viewBox="0 0 7 10" fill="none" stroke="#5f6d77" stroke-width="2.300"><path d="M5.700 0.700L1.500 4.800 5.700 9.200"></path></svg>
<svg class="abs" style="left:852.700px;top:163.700px;width:7px;height:9.600px" viewBox="0 0 7 10" fill="none" stroke="#fff" stroke-width="2.200"><path d="M1.300 0.700L5.500 4.800 1.300 9.200"></path></svg>
<svg class="abs" style="left:639px;top:191.700px;width:249px;height:173px" viewBox="639 191.700 249 173"><rect x="639.800" y="191.700" width="248.200" height="173" fill="#e0a468"></rect><rect x="651.600" y="203.600" width="224" height="149.700" fill="#04a99f"></rect><path d="M739 198L756.300 199.800V357L739 358.700Z" fill="#000" opacity="0.075"></path><path d="M788.400 198L771.100 199.800V357L788.400 358.700Z" fill="#000" opacity="0.075"></path><path d="M739 198L747 198.800V358L739 358.700Z" fill="#000" opacity="0.02"></path><path d="M788.400 198L780.400 198.800V358L788.400 358.700Z" fill="#000" opacity="0.02"></path><rect x="756.300" y="200.200" width="14.800" height="156.500" fill="#000" opacity="0.025"></rect><rect x="651.600" y="203.600" width="224" height="149.700" fill="none" stroke="#dff7f2" stroke-width="1"></rect><path d="M726.300 203.600v149.700M801.200 203.600v149.700" stroke="#dff7f2" stroke-width="0.900"></path><path d="M726.300 191.700v11.900M801.200 191.700v11.900M726.300 353.300v11.400M801.200 353.300v11.400" stroke="#f8ead8" stroke-width="1" stroke-dasharray="1.400 1.400"></path><path d="M646.400 203.600h3.800M877 203.600h3.800M646.400 353.300h3.800M877 353.300h3.800" stroke="#f8ead8" stroke-width="0.900" opacity="0.800"></path><path d="M763.600 202v153" stroke="#e6fffb" stroke-width="0.900" opacity="0.400"></path><circle cx="763.600" cy="201.300" r="1.350" fill="#1a1410"></circle><circle cx="763.600" cy="355.500" r="1.350" fill="#1a1410"></circle></svg>
<div class="abs" style="left:675.0px;top:235.0px;width:178.4px;height:85.4px;background:rgba(14,52,58,0.90);border-radius:0px;box-shadow:0 1px 4px rgba(0,0,0,.35);"></div>
<svg class="abs" style="left:689px;top:262.9px;width:14.600px;height:23.400px" viewBox="0 0 15 24"><path d="M0.500 2.300L4.700 1.100 7.500 3.900 10.300 1.100 14.500 2.300Q13.500 6 13.700 10L13.400 18.500 14.100 23.600H0.900L1.600 18.500 1.300 10Q1.500 6 0.500 2.300Z" fill="#e6e8ea"></path><path d="M4.500 1.300L7.500 4.300 10.500 1.300" fill="none" stroke="#2a353d" stroke-width="0.900"></path><path d="M0.600 2.600Q1.600 6 1.300 9M14.400 2.600Q13.400 6 13.700 9" fill="none" stroke="#27323a" stroke-width="0.700"></path></svg>
<svg class="abs" style="left:823.7px;top:274.3px;width:14.600px;height:23.400px" viewBox="0 0 15 24"><path d="M0.500 2.300L4.700 1.100 7.500 3.900 10.300 1.100 14.500 2.300Q13.500 6 13.700 10L13.400 18.500 14.100 23.600H0.900L1.600 18.500 1.300 10Q1.500 6 0.500 2.300Z" fill="#e6e8ea"></path><path d="M4.500 1.300L7.500 4.300 10.500 1.300" fill="none" stroke="#2a353d" stroke-width="0.900"></path><path d="M0.600 2.600Q1.600 6 1.300 9M14.400 2.600Q13.400 6 13.700 9" fill="none" stroke="#27323a" stroke-width="0.700"></path></svg>
<div class="t" style="left: 685.3px; top: 290.74px; font-size: 9.6px; color: rgb(230, 236, 238); font-weight: normal; -webkit-text-stroke: 0px; letter-spacing: -0.042px;">Puerto Rico</div>
<div class="t" style="left: 685.3px; top: 302.24px; font-size: 9.6px; color: rgb(230, 236, 238); font-weight: normal; -webkit-text-stroke: 0px; letter-spacing: -0.28px; transform: scale(0.9502, 1); transform-origin: 0px 85%;">U19</div>
<div class="t" style="left: 794.8px; top: 302.14px; font-size: 9.6px; color: rgb(230, 236, 238); font-weight: normal; -webkit-text-stroke: 0px; letter-spacing: -0.126px;">Turkey U19</div>
<div class="t" style="left: 745.7px; top: 245.18px; font-size: 11.2px; color: rgb(255, 255, 255); font-weight: bold; letter-spacing: 0.002px;">3rd set</div>
<div class="t" style="left: 750px; top: 264.62px; font-size: 12.8px; color: rgb(255, 255, 255); font-weight: bold; letter-spacing: 0.448px;">0 : 2</div>
<div class="t" style="left: 754.4px; top: 281.65px; font-size: 9px; color: rgb(255, 255, 255); font-weight: bold; letter-spacing: -0.103px;">9 : 12</div>
<div class="abs" style="left:639.6px;top:364.5px;width:83.2px;height:31.5px;background:#2a3e4c;border-radius:0px;border-radius:0 0 0 7px;"></div>
<svg class="abs" style="left:672px;top:365px;width:18px;height:19px" viewBox="672 365 18 19" fill="none" stroke="#4590e2" stroke-width="1.400" stroke-linejoin="round"><path d="M675 369Q675 367.500 676.400 368.200L686.600 373.700Q687.800 374.500 686.600 375.300L676.400 380.900Q675 381.600 675 380.100Z"></path></svg>
<div class="t" style="left: 671.7px; top: 385.45px; font-size: 9.7px; color: rgb(74, 147, 228); font-weight: normal; -webkit-text-stroke: 0px; text-shadow: currentcolor 0px 0px 0.4px; letter-spacing: -0.28px; transform: scale(0.907, 1); transform-origin: 0px 85%;">LIVE</div>
<svg class="abs" style="left:752px;top:364px;width:24px;height:20px" viewBox="752 364 24 20" fill="none" stroke="#fff" stroke-width="1.100" stroke-linecap="round" stroke-linejoin="round"><path d="M758.300 372.600L770.200 367.400M764.200 370V367.600M759.300 372.700L756.200 378.800H762.400ZM768.700 368.400L765.500 374.500H771.900Z"></path><path d="M756.200 378.800a3.100 2.500 0 0 0 6.200 0M765.500 374.500a3.200 2.500 0 0 0 6.400 0"></path></svg>
<div class="t" style="left: 754.4px; top: 385.24px; font-size: 9.6px; color: rgb(255, 255, 255); font-weight: normal; -webkit-text-stroke: 0px; text-shadow: currentcolor 0px 0px 0.4px; letter-spacing: -0.002px; transform: scale(1, 1); transform-origin: 0px 85%;">H2H</div>
<svg class="abs" style="left:838.600px;top:366.700px;width:16.200px;height:15.800px" viewBox="0 0 20 19.400" fill="none" stroke="#fff" stroke-width="1.700" stroke-linejoin="round" stroke-linecap="round"><path d="M10 1.500l2.600 5.500 5.900.8-4.300 4.200 1.100 5.900L10 15l-5.300 2.900 1.100-5.900L1.500 7.800l5.900-.8z"></path><path d="M9 8.700l1.300-.9v4.300M8.600 12.400h3.200" stroke-width="1.300"></path></svg>
<div class="t" style="left: 820px; top: 385.24px; font-size: 9.6px; color: rgb(255, 255, 255); font-weight: normal; -webkit-text-stroke: 0px; text-shadow: currentcolor 0px 0px 0.4px; letter-spacing: -0.28px; transform: scale(0.9995, 1); transform-origin: 0px 85%;">STANDINGS</div>
<div class="abs" style="left:650.0px;top:559.8px;width:248.0px;height:40.2px;background:#2b9fee;border-radius:5px 5px 0 0px;"></div>
<div class="abs" style="left:666.0px;top:570.3px;width:17.4px;height:21.7px;background:#fff;border-radius:3.5px;"></div>
<div class="abs" style="left:669.6px;top:575.4px;width:10.2px;height:2.5px;background:#2b9fee;border-radius:1px;"></div>
<div class="abs" style="left:669.6px;top:579.9px;width:10.2px;height:2.5px;background:#2b9fee;border-radius:1px;"></div>
<div class="abs" style="left:669.6px;top:584.4px;width:10.2px;height:2.5px;background:#2b9fee;border-radius:1px;"></div>
<div class="t" style="left: 693.4px; top: 575.83px; font-size: 12.2px; color: rgb(255, 255, 255); font-weight: bold; letter-spacing: -0.273px;">Betslip</div>
<svg class="abs" style="left:0;top:0;width:900px;height:600px;pointer-events:none" viewBox="0 0 900 600"><path d="M741.0 583.2h6.8l-3.4 -4z" fill="#bfe3fa"></path></svg>
<div class="t" style="left: 794.6px; top: 577.5px; font-size: 8px; color: rgb(255, 255, 255); font-weight: bold; letter-spacing: -0.28px; transform: scale(0.8956, 1); transform-origin: 0px 85%;">QUICK BET</div>
<div class="abs" style="left:838.800px;top:571.800px;width:40.400px;height:18.800px;border-radius:10px;border:1.900px solid #fff"></div>
<div class="abs" style="left:840.9px;top:573.9px;width:14.5px;height:14.5px;background:#fff;border-radius:8px;"></div>
<svg class="abs" style="left:844.300px;top:576.200px;width:7.800px;height:10px" viewBox="0 0 8 10"><path d="M5 0L0.800 5.600h2.700L3 10l4.200-5.800H4.500z" fill="#2b9fee"></path></svg>

</body></html>
